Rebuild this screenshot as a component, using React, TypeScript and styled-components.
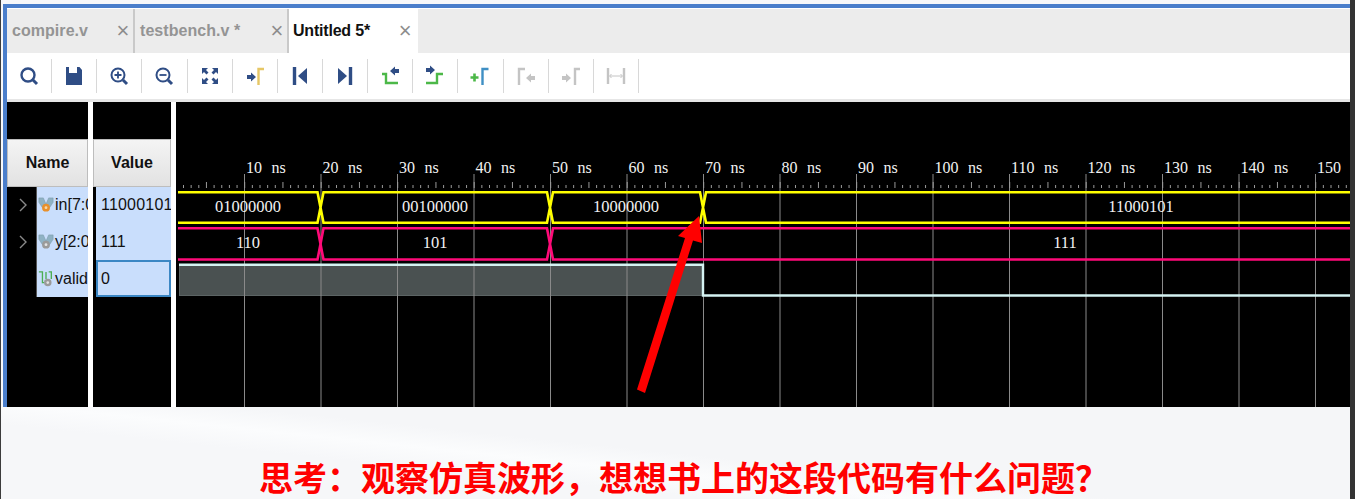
import React from "react";
import styled, { createGlobalStyle } from "styled-components";

const Global = createGlobalStyle`
  html, body { margin: 0; padding: 0; background: #f7f8fa; }
  #root { width: 1355px; height: 499px; overflow: hidden; }
`;

const UI = `"Liberation Sans", Arial, sans-serif`;

const Page = styled.div`
  box-sizing: border-box;
  width: 1355px;
  height: 499px;
  display: flex;
  flex-direction: column;
  border-left: 1px solid #3c3c3c;
  border-right: 5px solid #333;
  background: #f7f8fa;
  overflow: hidden;
`;
const Window = styled.div`
  box-sizing: border-box;
  margin: 4px 0 0 2px;
  flex: none;
  height: 403px;
  display: flex;
  flex-direction: column;
  border-top: 4px solid #4a7ecb;
  border-left: 4px solid #4a7ecb;
  background: #fff;
`;
const Tabs = styled.div`
  display: flex;
  height: 44px;
  flex: none;
  margin-top: 1px;
  background: #ececec;
`;
const Tab = styled.div<{ $w: number; $active?: boolean }>`
  box-sizing: border-box;
  width: ${(p) => p.$w}px;
  display: flex;
  align-items: center;
  justify-content: space-between;
  padding: 0 ${(p) => (p.$active ? 5 : 2)}px 0 ${(p) => (p.$active ? 4 : 5)}px;
  font: 700 16px ${UI};
  letter-spacing: ${(p) => (p.$active ? "-0.2px" : "0.05px")};
  color: ${(p) => (p.$active ? "#111" : "#949494")};
  background: ${(p) => (p.$active ? "#fff" : "transparent")};
  border-right: ${(p) => (p.$active ? "none" : "2px solid #c9c9c9")};
`;
const Close = styled.span`
  font: 400 22px ${UI};
  color: #8d8d8d;
  width: 16px;
  text-align: center;
`;
const Toolbar = styled.div`
  display: flex;
  align-items: center;
  height: 46px;
  flex: none;
  background: #fff;
  border-bottom: 3px solid #e6e6e6;
`;
const ToolButton = styled.div`
  box-sizing: border-box;
  width: 45.15px;
  height: 34px;
  display: flex;
  align-items: center;
  justify-content: center;
  border-right: 1px solid #d8d8d8;
`;
const Panes = styled.div`
  flex: 1;
  display: flex;
  gap: 5px;
  background: #fff;
  min-height: 0;
`;
const Column = styled.div<{ $w: number }>`
  width: ${(p) => p.$w}px;
  flex: none;
  background: #000;
  padding-top: 37px;
  box-sizing: border-box;
  display: flex;
  flex-direction: column;
`;
const Header = styled.div`
  box-sizing: border-box;
  height: 48px;
  display: flex;
  align-items: center;
  justify-content: center;
  font: 700 16px ${UI};
  color: #111;
  background: linear-gradient(#f4f4f4, #e2e2e2);
  border: 1px solid #bdbdbd;
`;
const NameRow = styled.div`
  height: 36.7px;
  display: flex;
  align-items: center;
`;
const Chevron = styled.div`
  width: 29px;
  flex: none;
  display: flex;
  justify-content: center;
  padding-left: 3px;
  box-sizing: border-box;
`;
const NameCell = styled.div`
  flex: 1;
  height: 100%;
  min-width: 0;
  display: flex;
  align-items: center;
  gap: 1px;
  padding-left: 1px;
  background: #c9defc;
  border-left: 1px solid #555;
  font: 400 16px ${UI};
  color: #111;
  overflow: hidden;
  white-space: nowrap;
`;
const ValueCell = styled.div<{ $selected?: boolean }>`
  box-sizing: border-box;
  margin-left: 3px;
  height: 36.7px;
  display: flex;
  align-items: center;
  padding-left: ${(p) => (p.$selected ? 3 : 5)}px;
  background: #c9defc;
  border: ${(p) => (p.$selected ? "2px solid #3b87c4" : "none")};
  font: 400 16px ${UI};
  letter-spacing: 0.2px;
  color: #111;
  overflow: hidden;
  white-space: nowrap;
`;
const WavePane = styled.div`
  flex: 1;
  background: #000;
  min-width: 0;
  svg { display: block; }
  text { font-family: "Liberation Serif", "Times New Roman", serif; fill: #f2f2f2; }
`;
const Footer = styled.div`
  flex: 1;
  display: flex;
  align-items: flex-start;
  padding: 50px 0 0 258px;
  background: linear-gradient(186deg, #f5f6f8 0%, #f5f6f8 50%, #fbfcfd 59%, #f6f7f9 68%, #f6f7f9 100%);
`;
const Caption = styled.div`
  font: 700 34px/40px "Noto Sans CJK SC", sans-serif;
  color: #ff0000;
  white-space: nowrap;
`;

const navy = "#2f4d85";
const gray = "#c4c4c4";

const Arrow = ({ x, y, dir, color }: { x: number; y: number; dir: 1 | -1; color: string }) => (
  <path
    d={`M${x} ${y - 2}L${x + dir * 4} ${y - 2}L${x + dir * 4} ${y - 4.5}L${x + dir * 9} ${y}L${x + dir * 4} ${y + 4.5}L${x + dir * 4} ${y + 2}L${x} ${y + 2}Z`}
    fill={color}
  />
);

const Svg = ({ children }: { children: React.ReactNode }) => (
  <svg width="24" height="24" viewBox="0 0 24 24">{children}</svg>
);

const icons: React.ReactNode[] = [
  <>
    <circle cx="11" cy="11" r="6.5" fill="none" stroke={navy} strokeWidth="2.4" />
    <path d="M16 16l4 4" stroke={navy} strokeWidth="3" />
  </>,
  <path d="M4 3h3v6h8V3h2.5L20 6v15H4z" fill={navy} />,
  <>
    <circle cx="11" cy="11" r="6.5" fill="none" stroke={navy} strokeWidth="2" />
    <path d="M7.5 11h7M11 7.5v7" stroke={navy} strokeWidth="1.8" />
    <path d="M16 16l4 4" stroke={navy} strokeWidth="3" />
  </>,
  <>
    <circle cx="11" cy="11" r="6.5" fill="none" stroke={navy} strokeWidth="2" />
    <path d="M7.5 11h7" stroke={navy} strokeWidth="1.8" />
    <path d="M16 16l4 4" stroke={navy} strokeWidth="3" />
  </>,
  <path
    d="M4 4h6l-2 2 2.5 2.5-2 2L6 8 4 10zM20 4v6l-2-2-2.5 2.5-2-2L16 6l-2-2zM4 20v-6l2 2 2.5-2.5 2 2L8 18l2 2zM20 20h-6l2-2-2.5-2.5 2-2L18 16l2-2z"
    fill={navy}
  />,
  <>
    <Arrow x={4} y={13} dir={1} color={navy} />
    <path d="M15.5 21V5H21" fill="none" stroke="#e6c766" strokeWidth="2.4" />
  </>,
  <>
    <path d="M6.5 3v18" stroke={navy} strokeWidth="3.4" />
    <path d="M19 4v16l-9-8z" fill={navy} />
  </>,
  <>
    <path d="M17.5 3v18" stroke={navy} strokeWidth="3.4" />
    <path d="M5 4v16l9-8z" fill={navy} />
  </>,
  <>
    <path d="M4 10H8V19H20" fill="none" stroke="#4cb848" strokeWidth="2.4" />
    <Arrow x={21} y={7} dir={-1} color={navy} />
  </>,
  <>
    <Arrow x={3} y={6} dir={1} color={navy} />
    <path d="M3 19H14V10H20" fill="none" stroke="#4cb848" strokeWidth="2.4" />
  </>,
  <>
    <path d="M2.5 13.5h8M6.5 9.5v8" stroke="#4cb848" strokeWidth="2.6" />
    <path d="M14.5 21V5h6" fill="none" stroke="#3f8fc4" strokeWidth="2.4" />
  </>,
  <>
    <path d="M5 21V5h6" fill="none" stroke={gray} strokeWidth="2.4" />
    <Arrow x={21} y={14} dir={-1} color={gray} />
  </>,
  <>
    <Arrow x={3} y={14} dir={1} color={gray} />
    <path d="M16 21V5h5" fill="none" stroke={gray} strokeWidth="2.4" />
  </>,
  <>
    <path d="M4 4v16M20 4v16" stroke={gray} strokeWidth="2.4" />
    <path d="M6 12h12M7.5 10l-2 2 2 2M16.5 10l2 2-2 2" fill="none" stroke={gray} strokeWidth="1" />
  </>,
];

const Medal = ({ color, inner }: { color: string; inner: string }) => (
  <svg width="16" height="16" viewBox="0 0 18 18" style={{ flex: "none" }}>
    <path d="M1 1h5l3 7 3-7h5v5l-4 6H5L1 6z" fill="#8fb2c4" stroke="#7b99a8" strokeWidth=".6" />
    <circle cx="9" cy="12" r="4.4" fill={color} />
    <circle cx="9" cy="12" r="1.6" fill={inner} />
  </svg>
);
const BitIcon = () => (
  <svg width="16" height="18" viewBox="0 0 18 20" style={{ flex: "none" }}>
    <path d="M1 2h4v12h2M12 2h3v8M9 2v8" fill="none" stroke="#4cae52" strokeWidth="1.5" />
    <circle cx="11" cy="14" r="4.2" fill="#9a9a9a" />
    <circle cx="11" cy="14" r="1.5" fill="#e4e4e4" />
  </svg>
);
const Chev = () => (
  <svg width="10" height="14" viewBox="0 0 10 14">
    <path d="M2 1l6 6-6 6" fill="none" stroke="#8a8a8a" strokeWidth="1.4" />
  </svg>
);

const STEP = 76.5;
const majors = Array.from({ length: 15 }, (_, i) => 244.5 + i * STEP);
const minors = Array.from({ length: 160 }, (_, i) => 183.5 + i * (STEP / 10)).filter(
  (x) => x > 178 && x < 1350
);

const busPath = (edges: number[], top: number, bottom: number) => {
  const mid = (top + bottom) / 2;
  const parts: string[] = [];
  for (let i = 0; i < edges.length - 1; i++) {
    const a = edges[i];
    const b = edges[i + 1];
    const isFirst = i === 0;
    const isLast = i === edges.length - 2;
    const topLeft = isFirst ? `M${a} ${top}` : `M${a} ${mid}L${a + 3} ${top}`;
    const right = isLast
      ? `L${b} ${top}M${b} ${bottom}`
      : `L${b - 3} ${top}L${b} ${mid}L${b - 3} ${bottom}`;
    const bottomLeft = isFirst ? `L${a} ${bottom}` : `L${a + 3} ${bottom}L${a} ${mid}`;
    parts.push(`${topLeft}${right}${bottomLeft}`);
  }
  return parts.join("");
};

const inEdges = [178, 320.5, 550, 703, 1352];
const yEdges = [178, 320.5, 550, 1352];
const inLabels: [number, string][] = [
  [248, "01000000"],
  [435, "00100000"],
  [626, "10000000"],
  [1141, "11000101"],
];
const yLabels: [number, string][] = [
  [248, "110"],
  [435, "101"],
  [1065, "111"],
];

const Wave = () => (
  <svg width="1174" height="306" viewBox="176 101 1174 306">
    <rect x="179.5" y="264" width="524" height="30.5" fill="#4a5151" stroke="#5c6464" />
    {majors.map((x) => (
      <line key={x} x1={x} x2={x} y1="173" y2="407" stroke="#8a8a8a" strokeWidth="1" />
    ))}
    {minors.map((x, i) => (
      <line
        key={x}
        x1={x}
        x2={x}
        y1={i % 5 === 3 ? 181 : 184}
        y2="187"
        stroke="#9a9a9a"
        strokeWidth="1"
      />
    ))}
    {majors.map((x, i) => (
      <text key={x} x={x + 1.5} y="172" fontSize="16" wordSpacing="5.5">
        {(i + 1) * 10} ns
      </text>
    ))}
    <path d={busPath(inEdges, 191.3, 221.7)} fill="none" stroke="#ffff00" strokeWidth="2.6" />
    <path d={busPath(yEdges, 227.3, 258.5)} fill="none" stroke="#ff0a78" strokeWidth="2.6" />
    <path d="M179 263.7H703V294.5H1352" fill="none" stroke="#d4f2f2" strokeWidth="2.4" />
    {inLabels.map(([x, t]) => (
      <text key={t} x={x} y="210.5" fontSize="16.5" textAnchor="middle">{t}</text>
    ))}
    {yLabels.map(([x, t]) => (
      <text key={t} x={x} y="247" fontSize="16.5" textAnchor="middle">{t}</text>
    ))}
    <path d="M699 215L702 242L693 239.5L645 392L637 388.5L685 237L678 235Z" fill="#ff0000" />
  </svg>
);

const tabs = [
  { name: "compire.v", w: 128 },
  { name: "testbench.v *", w: 154 },
  { name: "Untitled 5*", w: 129, active: true },
];

export default function App() {
  return (
    <Page>
      <Global />
      <Window>
        <Tabs>
          {tabs.map((t) => (
            <Tab key={t.name} $w={t.w} $active={t.active}>
              {t.name}
              <Close>×</Close>
            </Tab>
          ))}
        </Tabs>
        <Toolbar>
          {icons.map((icon, i) => (
            <ToolButton key={i}>
              <Svg>{icon}</Svg>
            </ToolButton>
          ))}
        </Toolbar>
        <Panes>
          <Column $w={81}>
            <Header>Name</Header>
            <NameRow>
              <Chevron><Chev /></Chevron>
              <NameCell><Medal color="#e8902c" inner="#f7d9a8" />in[7:0]</NameCell>
            </NameRow>
            <NameRow>
              <Chevron><Chev /></Chevron>
              <NameCell><Medal color="#9a9a9a" inner="#e4e4e4" />y[2:0]</NameCell>
            </NameRow>
            <NameRow>
              <Chevron />
              <NameCell><BitIcon />valid</NameCell>
            </NameRow>
          </Column>
          <Column $w={78}>
            <Header>Value</Header>
            <ValueCell>11000101</ValueCell>
            <ValueCell>111</ValueCell>
            <ValueCell $selected>0</ValueCell>
          </Column>
          <WavePane><Wave /></WavePane>
        </Panes>
      </Window>
      <Footer>
        <Caption>思考：观察仿真波形，想想书上的这段代码有什么问题？</Caption>
      </Footer>
    </Page>
  );
}
